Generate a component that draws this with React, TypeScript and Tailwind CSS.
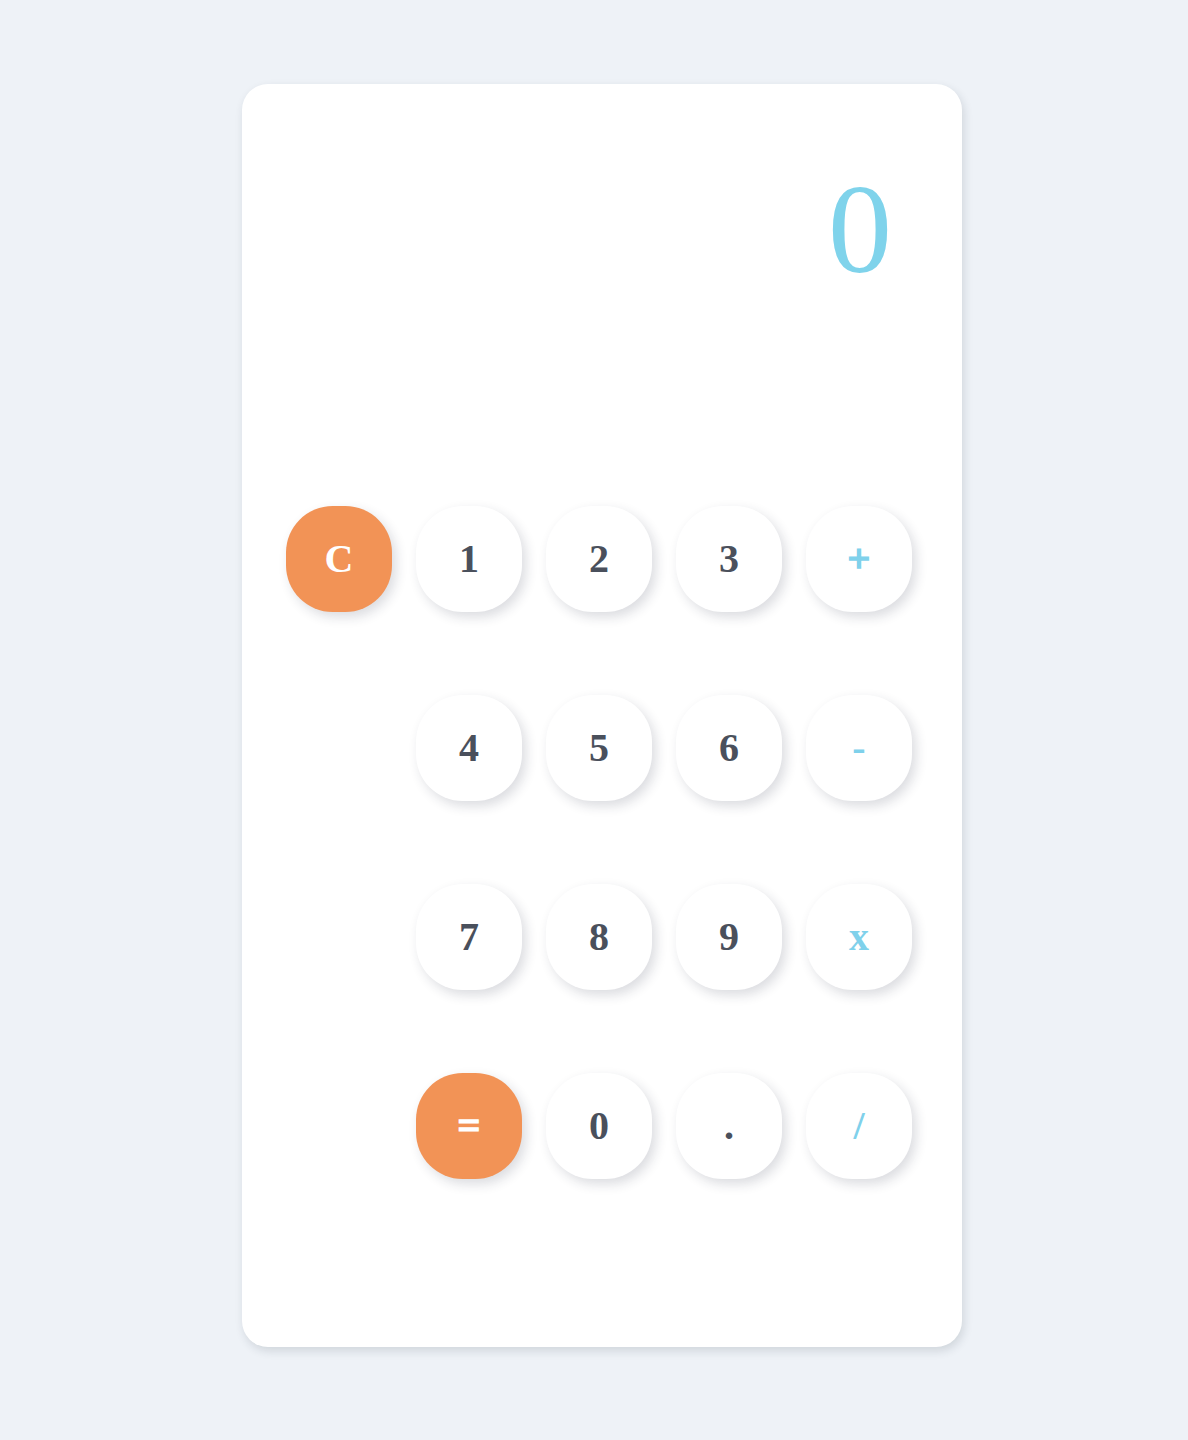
const keys = [
  ["C", "1", "2", "3", "+"],
  ["", "4", "5", "6", "-"],
  ["", "7", "8", "9", "x"],
  ["", "=", "0", ".", "/"],
];

const ops = ["+", "-", "x", "/"];

function Key({ label }: { label: string }) {
  if (!label) return <div className="w-[106px] h-[106px]" />;

  const accent = label === "C" || label === "=";
  const op = ops.includes(label);
  // + and = render thin in Liberation, thicken them a bit
  const heavy = label === "+" || label === "=";

  return (
    <button
      className={
        (accent
          ? "w-[106px] h-[106px] rounded-[44%] bg-[#f29356] text-white text-[40px] font-bold leading-none flex items-center justify-center shadow-[4px_5px_12px_rgba(30,40,60,0.16)]"
          : op
            ? "w-[106px] h-[106px] rounded-[44%] bg-white text-[#7fd1eb] text-[40px] font-bold leading-none flex items-center justify-center shadow-[4px_5px_12px_rgba(30,40,60,0.16)]"
            : "w-[106px] h-[106px] rounded-[44%] bg-white text-[#4a505c] text-[40px] font-bold leading-none flex items-center justify-center shadow-[4px_5px_12px_rgba(30,40,60,0.16)]") +
        (heavy ? " [-webkit-text-stroke:1.5px_currentColor]" : "")
      }
    >
      {label}
    </button>
  );
}

export default function App() {
  return (
    <div className="min-h-[1440px] bg-[#eef2f7] pt-[84px] font-['Liberation_Serif',serif]">
      <div className="ml-[242px] w-[720px] bg-white rounded-[26px] shadow-[2px_4px_10px_rgba(30,40,60,0.14)] pt-[81px] pb-[168px]">
        {/* Display */}
        <div className="h-[128px] pr-[70px] text-right text-[128px] leading-none text-[#7fd3eb]">
          0
        </div>

        {/* Keypad */}
        <div className="mt-[213px] pl-[44px] flex flex-col gap-[83px]">
          {keys.map((row, i) => (
            <div key={i} className="flex gap-[24px]">
              {row.map((k, j) => (
                <Key key={j} label={k} />
              ))}
            </div>
          ))}
        </div>
      </div>
    </div>
  );
}
